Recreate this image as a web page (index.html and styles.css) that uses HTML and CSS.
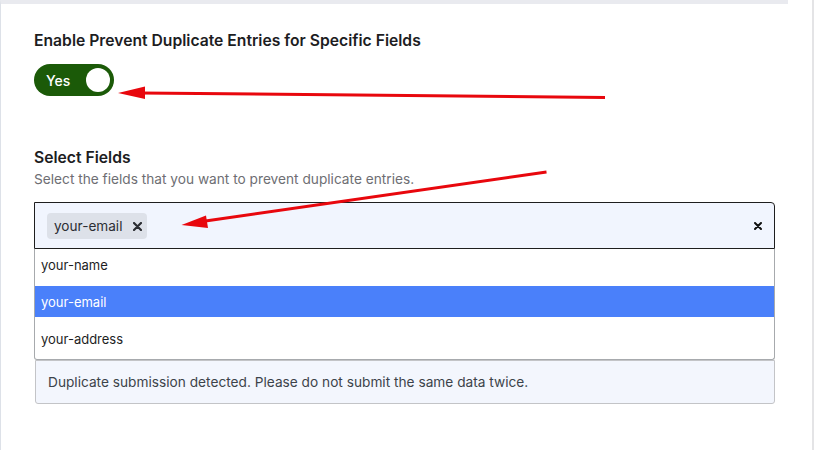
FILE: index.html
```html
<!DOCTYPE html>
<html lang="en">
<head>
<meta charset="utf-8">
<title>Prevent Duplicate Entries</title>
<link rel="stylesheet" href="styles.css">
</head>
<body>
<div class="page">
  <main class="panel">
    <h2 class="title">Enable Prevent Duplicate Entries for Specific Fields</h2>
    <div class="toggle">
      <span class="toggle-label">Yes</span>
      <span class="knob"></span>
    </div>

    <h3 class="section-title">Select Fields</h3>
    <p class="desc">Select the fields that you want to prevent duplicate entries.</p>

    <div class="select">
      <div class="select-box">
        <span class="tag">your-email
          <svg class="tag-x" width="9" height="9" viewBox="0 0 9 9"><path d="M1 1L8 8M8 1L1 8" stroke="#2b2d33" stroke-width="2.2" stroke-linecap="round"/></svg>
        </span>
        <svg class="clear" width="8" height="8" viewBox="0 0 8 8"><path d="M1 1L7 7M7 1L1 7" stroke="#111" stroke-width="2" stroke-linecap="round"/></svg>
      </div>
      <ul class="options">
        <li class="option">your-name</li>
        <li class="option active">your-email</li>
        <li class="option">your-address</li>
      </ul>
    </div>

    <div class="message">Duplicate submission detected. Please do not submit the same data twice.</div>
  </main>
  <div class="gutter"></div>
  <div class="rule"></div>
</div>

<svg class="arrows" width="815" height="450" viewBox="0 0 815 450">
  <line x1="605" y1="97.5" x2="140" y2="93" stroke="#e8070d" stroke-width="3"/>
  <polygon points="118,93 145,86.5 145,99" fill="#e8070d"/>
  <line x1="546.5" y1="172" x2="202" y2="221.5" stroke="#e8070d" stroke-width="3"/>
  <polygon points="181.5,225 206,215.5 208,228" fill="#e8070d"/>
</svg>
</body>
</html>
```

FILE: styles.css
```css
* { box-sizing: border-box; }

html, body {
  margin: 0;
  padding: 0;
  background: #ffffff;
  font-family: Inter, "Noto Sans", "Liberation Sans", sans-serif;
  color: #1e1e1e;
}

.page {
  display: flex;
  height: 450px;
  overflow: hidden;
  position: relative;
}

.panel {
  width: 788px;
  flex: none;
  border-top: 4px solid #e9eaef;
  border-left: 1px solid #dde1e8;
  padding: 27px 12px 0 33px;
}

.gutter {
  width: 24px;
  flex: none;
}

.rule {
  width: 2px;
  flex: none;
  background: #e4e4e6;
}

.title {
  margin: 0;
  font-size: 15.7px;
  line-height: 20px;
  font-weight: 600;
  color: #1d1d1f;
}

.toggle {
  margin-top: 13px;
  width: 80px;
  height: 32px;
  border-radius: 16px;
  background: #1b5a08;
  display: flex;
  align-items: center;
  justify-content: space-between;
  padding: 0 4px 0 12px;
}

.toggle-label {
  color: #ffffff;
  font-size: 14px;
  font-weight: 500;
}

.knob {
  width: 24px;
  height: 24px;
  border-radius: 50%;
  background: #ffffff;
}

.section-title {
  margin: 52px 0 0;
  font-size: 15.7px;
  line-height: 20px;
  font-weight: 600;
  color: #1d1d1f;
}

.desc {
  margin: 1px 0 0;
  font-size: 13.7px;
  line-height: 20px;
  color: #6e6e73;
}

.select {
  margin-top: 13px;
  width: 741px;
}

.select-box {
  height: 47px;
  border: 1px solid #1e1e1e;
  border-top-right-radius: 4px;
  background: #f1f5fe;
  display: flex;
  align-items: flex-start;
  justify-content: space-between;
  padding: 10px 12px 0 12px;
}

.tag {
  display: flex;
  align-items: center;
  height: 26px;
  padding: 0 5px 0 7px;
  border-radius: 4px;
  background: #dde1e9;
  font-size: 13.6px;
  color: #2b2d33;
  width: 100px;
  justify-content: space-between;
}

.tag-x { display: block; }

.clear {
  display: block;
  margin-top: 9px;
  margin-right: 0;
}

.options {
  list-style: none;
  margin: 0;
  padding: 0 0 5px;
  background: #ffffff;
  border: 1px solid #a7aaad;
  border-top: none;
  border-bottom-left-radius: 3px;
  border-bottom-right-radius: 3px;
}

.option {
  height: 31px;
  line-height: 33px;
  padding-left: 6px;
  font-size: 13px;
  color: #1e1e1e;
  margin-bottom: 6px;
}

.option:last-child { margin-bottom: 0; }

.option.active {
  background: #4a80fa;
  color: #ffffff;
}

.message {
  margin-left: 1px;
  width: 740px;
  height: 44px;
  border: 1px solid #c3c4c7;
  border-radius: 0 0 3px 3px;
  background: #f3f6fd;
  padding: 0 12px;
  display: flex;
  align-items: center;
  font-size: 13.7px;
  color: #3c434a;
}

.arrows {
  position: absolute;
  left: 0;
  top: 0;
  pointer-events: none;
}
```
